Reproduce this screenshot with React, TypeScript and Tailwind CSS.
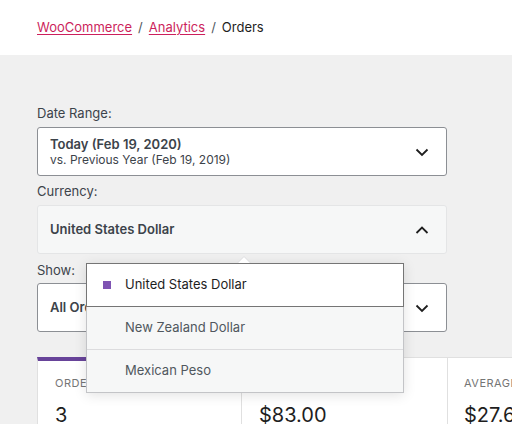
import React from "react";

const Chevron = ({ up = false }: { up?: boolean }) => (
  <svg width="24" height="24" viewBox="0 0 24 24" className="shrink-0">
    <path
      d={up ? "M6.5 15l5.5-5.5 5.5 5.5" : "M6.5 9.5l5.5 5.5 5.5-5.5"}
      fill="none"
      stroke="#1e1e1e"
      strokeWidth="1.8"
    />
  </svg>
);

export default function App() {
  return (
    <div className="relative w-[512px] h-[424px] overflow-hidden bg-[#f0f0f0] font-['Inter','Liberation_Sans',sans-serif]">
      <div className="h-[55px] bg-white flex items-center px-[37px] text-[13px] text-[#1e1e1e]">
        <a className="text-[#cc1f5c] underline underline-offset-2">WooCommerce</a>
        <span className="mx-[6px] text-[#50575e]">/</span>
        <a className="text-[#cc1f5c] underline underline-offset-2">Analytics</a>
        <span className="mx-[6px] text-[#50575e]">/</span>
        <span className="text-[#1e1e1e]">Orders</span>
      </div>

      <div className="relative px-[37px] pt-[50px]">
        <div className="w-[410px] flex flex-col">
          <div className="h-[16px] text-[13px] leading-[16px] text-[#3c434a]">Date Range:</div>
          <div className="mt-[6px] h-[49px] bg-white border border-[#8c8f94] rounded-[3px] flex items-center justify-between pl-[12px] pr-[12px]">
            <div className="flex flex-col">
              <span className="text-[13px] leading-[15px] font-semibold text-[#3c434a]">Today (Feb 19, 2020)</span>
              <span className="text-[12px] leading-[15px] text-[#3c434a]">vs. Previous Year (Feb 19, 2019)</span>
            </div>
            <Chevron />
          </div>

          <div className="mt-[7px] h-[16px] text-[13px] leading-[16px] text-[#3c434a]">Currency:</div>
          <div className="mt-[6px] h-[49px] bg-[#f6f7f7] border border-[#e4e5e6] rounded-[3px] flex items-center justify-between pl-[12px] pr-[12px]">
            <span className="text-[13px] font-semibold text-[#3c434a]">United States Dollar</span>
            <Chevron up />
          </div>

          <div className="mt-[8px] h-[16px] text-[13px] leading-[16px] text-[#3c434a]">Show:</div>
          <div className="mt-[5px] h-[49px] bg-white border border-[#8c8f94] rounded-[3px] flex items-center justify-between pl-[12px] pr-[12px]">
            <span className="text-[13px] font-semibold text-[#3c434a]">All Orders</span>
            <Chevron />
          </div>
        </div>

        <div className="mt-[25px] flex border-t border-b border-[#e0e0e0] w-[700px]">
          <div className="w-[205px] shrink-0 bg-white border-l border-r border-[#e0e0e0] border-t-4 border-t-[#674399] -mt-px pl-[17px] pt-[14px] h-[80px]">
            <div className="text-[11px] uppercase tracking-[0.5px] text-[#757575]">Orders</div>
            <div className="mt-[9px] text-[20px] leading-[28px] text-[#1e1e1e]">3</div>
          </div>
          <div className="w-[206px] shrink-0 bg-white border-r border-[#e0e0e0] pl-[17px] pt-[17px] h-[80px]">
            <div className="text-[11px] uppercase tracking-[0.5px] text-[#757575]">Net sales</div>
            <div className="mt-[9px] text-[20px] leading-[28px] text-[#1e1e1e]">$83.00</div>
          </div>
          <div className="w-[206px] shrink-0 bg-white border-r border-[#e0e0e0] pl-[16px] pt-[17px] h-[80px]">
            <div className="text-[11px] uppercase tracking-[0.5px] text-[#757575]">Average order value</div>
            <div className="mt-[9px] text-[20px] leading-[28px] text-[#1e1e1e]">$27.67</div>
          </div>
        </div>
      </div>

      {/* popover */}
      <div className="absolute left-[86px] top-[263px] w-[318px] bg-[#f6f7f7] border border-[#c3c4c7] shadow-[0_2px_12px_rgba(0,0,0,0.12)]">
        <svg className="absolute left-[149px] -top-[8px]" width="16" height="9" viewBox="0 0 16 9">
          <path d="M0 8.5 L8 0.5 L16 8.5" fill="#ffffff" stroke="#dcdcde" strokeWidth="1" />
        </svg>
        <div className="relative h-[44px] bg-white border border-[#757575] -m-px flex items-center pl-[16px]">
          <span className="w-[8px] h-[8px] bg-[#7f54b3]" />
          <span className="ml-[14px] text-[13px] text-[#1e1e1e]">United States Dollar</span>
        </div>
        <div className="h-[43px] flex items-center pl-[38px] text-[13px] text-[#50575e] border-b border-[#dcdcde] mt-px">New Zealand Dollar</div>
        <div className="h-[42px] flex items-center pl-[38px] text-[13px] text-[#50575e]">Mexican Peso</div>
      </div>
    </div>
  );
}
